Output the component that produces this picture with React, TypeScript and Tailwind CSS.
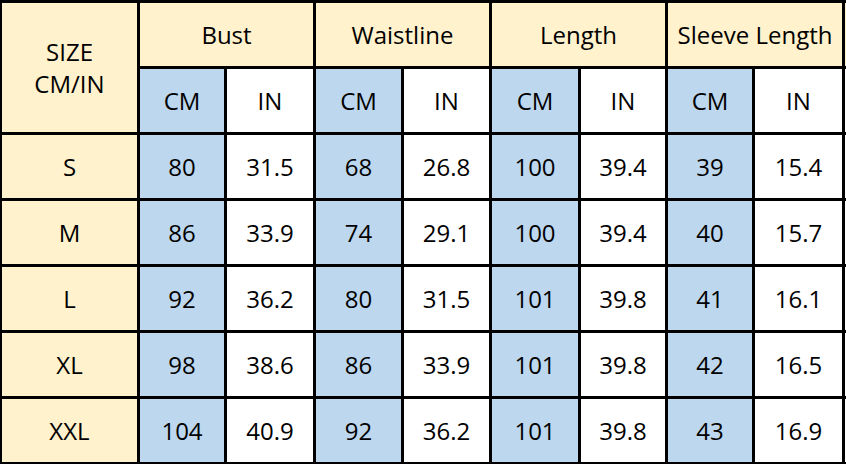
import React from "react"

const groups = ["Bust", "Waistline", "Length", "Sleeve Length"]

const rows: { size: string; values: string[] }[] = [
  { size: "S", values: ["80", "31.5", "68", "26.8", "100", "39.4", "39", "15.4"] },
  { size: "M", values: ["86", "33.9", "74", "29.1", "100", "39.4", "40", "15.7"] },
  { size: "L", values: ["92", "36.2", "80", "31.5", "101", "39.8", "41", "16.1"] },
  { size: "XL", values: ["98", "38.6", "86", "33.9", "101", "39.8", "42", "16.5"] },
  { size: "XXL", values: ["104", "40.9", "92", "36.2", "101", "39.8", "43", "16.9"] },
]

const cell = "flex items-center justify-center text-center"

export default function App() {
  return (
    <div
      className="w-[846px] h-[464px] overflow-hidden bg-white text-black"
      style={{ fontFamily: '"Open Sans", "Noto Sans", sans-serif' }}
    >
      <div className="grid w-max bg-black gap-[3px] pt-[3px] pb-[3px] pl-[2px] grid-cols-[135px_84px_86px_85px_85px_86px_84px_84px_87px_20px] grid-rows-[repeat(7,63px)] text-[24px] leading-[32px]">
        {/* header */}
        <div className={`${cell} row-span-2 bg-[#fff2cc]`}>
          SIZE
          <br />
          CM/IN
        </div>
        {groups.map((g) => (
          <div key={g} className={`${cell} col-span-2 bg-[#fff2cc]`}>
            {g}
          </div>
        ))}
        <div className="bg-[#fff2cc]" />

        {groups.map((g) => (
          <React.Fragment key={g + "-units"}>
            <div className={`${cell} bg-[#bdd7ee]`}>CM</div>
            <div className={`${cell} bg-white`}>IN</div>
          </React.Fragment>
        ))}
        <div className="bg-white" />

        {/* body */}
        {rows.map((r) => (
          <React.Fragment key={r.size}>
            <div className={`${cell} bg-[#fff2cc]`}>{r.size}</div>
            {r.values.map((v, i) => (
              <div key={i} className={`${cell} ${i % 2 === 0 ? "bg-[#bdd7ee]" : "bg-white"}`}>
                {v}
              </div>
            ))}
            <div className="bg-white" />
          </React.Fragment>
        ))}
      </div>
    </div>
  )
}
